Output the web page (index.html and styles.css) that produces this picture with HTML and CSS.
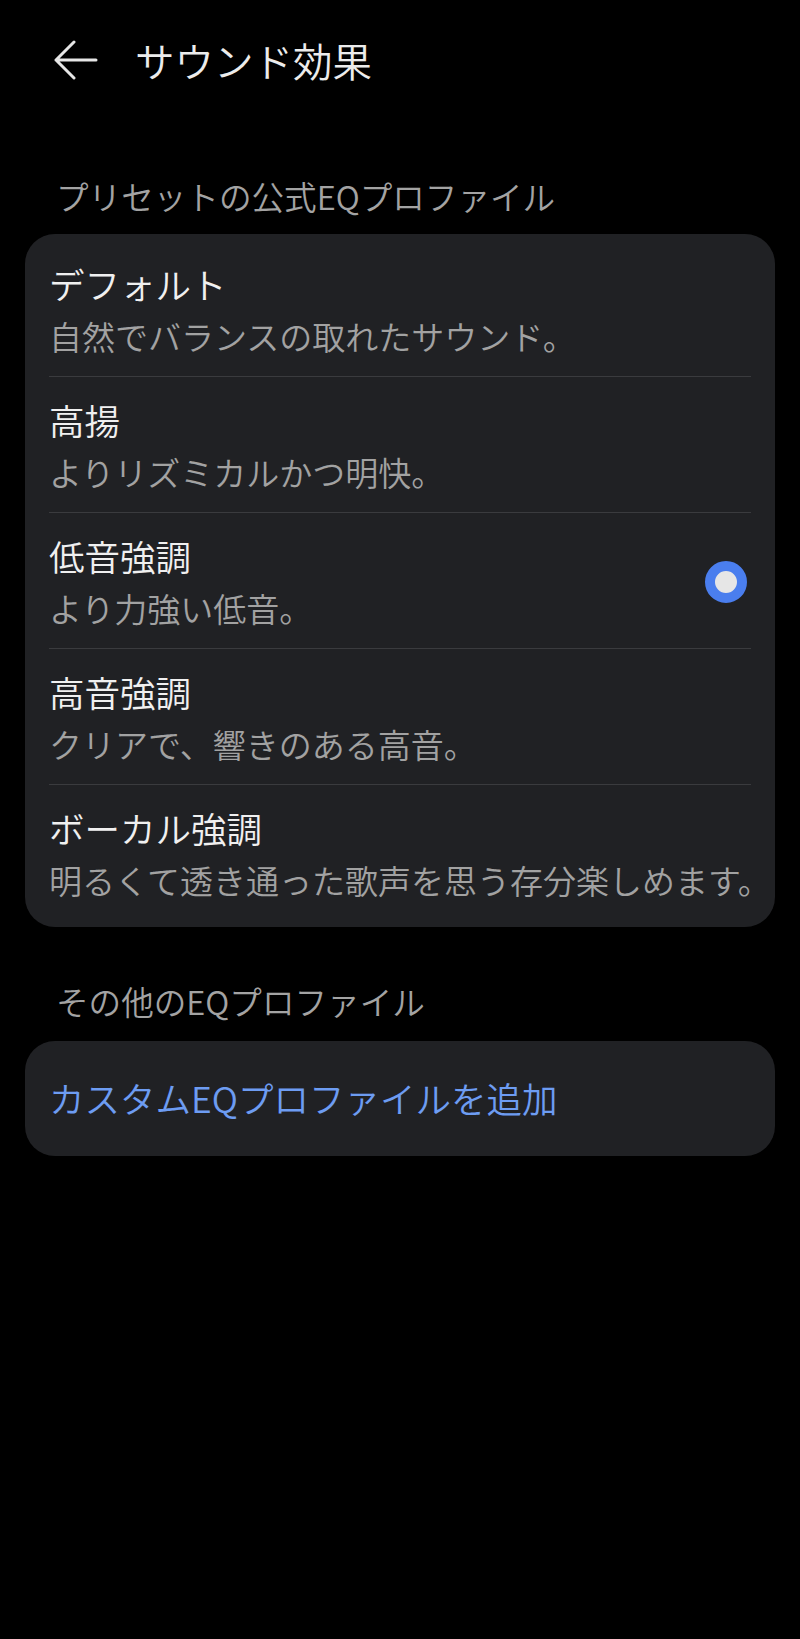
FILE: index.html
```html
<!DOCTYPE html>
<html lang="ja">
<head>
<meta charset="utf-8">
<title>サウンド効果</title>
<link rel="stylesheet" href="styles.css">
</head>
<body>
<header class="appbar">
  <svg class="back" width="44" height="40" viewBox="0 0 44 40" aria-hidden="true">
    <path d="M2 20 H42 M20 2 L2 20 L20 38" fill="none" stroke="#e6e6e6" stroke-width="3" stroke-linecap="round" stroke-linejoin="round"/>
  </svg>
  <h1 class="title">サウンド効果</h1>
</header>

<h2 class="section">プリセットの公式EQプロファイル</h2>
<section class="card list">
  <div class="row">
    <div class="texts">
      <div class="row-title">デフォルト</div>
      <div class="row-sub">自然でバランスの取れたサウンド。</div>
    </div>
  </div>
  <div class="row">
    <div class="texts">
      <div class="row-title">高揚</div>
      <div class="row-sub">よりリズミカルかつ明快。</div>
    </div>
  </div>
  <div class="row">
    <div class="texts">
      <div class="row-title">低音強調</div>
      <div class="row-sub">より力強い低音。</div>
    </div>
    <span class="radio"></span>
  </div>
  <div class="row">
    <div class="texts">
      <div class="row-title">高音強調</div>
      <div class="row-sub">クリアで、響きのある高音。</div>
    </div>
  </div>
  <div class="row">
    <div class="texts">
      <div class="row-title">ボーカル強調</div>
      <div class="row-sub">明るくて透き通った歌声を思う存分楽しめます。</div>
    </div>
  </div>
</section>

<h2 class="section section-2">その他のEQプロファイル</h2>
<section class="card single">
  <div class="link">カスタムEQプロファイルを追加</div>
</section>
</body>
</html>
```

FILE: styles.css
```css
html, body {
  margin: 0;
  padding: 0;
  background: #000;
}
body {
  font-family: "Noto Sans CJK JP", "Noto Sans", sans-serif;
  font-weight: 350;
  color: #f0f0f0;
  min-height: 1639px;
}
.appbar {
  height: 120px;
  display: flex;
  align-items: center;
  padding-left: 54px;
  box-sizing: border-box;
}
.back {
  display: block;
  flex: none;
}
.title {
  margin: 0 0 0 37px;
  font-size: 39.5px;
  font-weight: 350;
  line-height: 48px;
  color: #ececec;
}
.section {
  margin: 56px 0 18px;
  padding-left: 56px;
  font-size: 32.6px;
  font-weight: 350;
  line-height: 40px;
  color: #a3a3a3;
}
.section-2 {
  margin-top: 54px;
  margin-bottom: 20px;
}
.card {
  margin: 0 25px;
  background: #202124;
  border-radius: 30px;
  padding: 0 24px;
}
.list {
  padding-top: 7px;
  padding-bottom: 7px;
}
.row {
  display: flex;
  align-items: center;
  padding: 21px 0 19px;
  border-bottom: 1px solid #3a3b3e;
}
.row:last-child {
  border-bottom: none;
}
.texts {
  flex: 1;
  min-width: 0;
}
.row-title {
  font-size: 35.5px;
  line-height: 44px;
  color: #f0f0f0;
}
.row-sub {
  margin-top: 9px;
  font-size: 33px;
  line-height: 42px;
  color: #a2a2a2;
  white-space: nowrap;
}
.radio {
  flex: none;
  width: 22px;
  height: 22px;
  border: 10px solid #4a7eee;
  border-radius: 50%;
  background: #e6e6e6;
  margin-right: 4px;
}
.single {
  padding-top: 35px;
  padding-bottom: 36px;
}
.link {
  font-size: 35.5px;
  line-height: 44px;
  color: #6d9cf2;
}
```
